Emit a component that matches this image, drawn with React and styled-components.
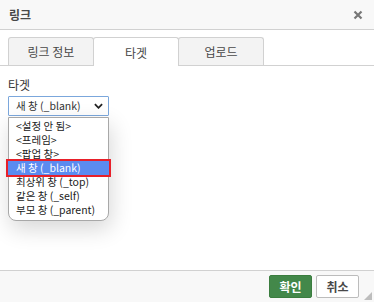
import React from "react";
import styled, { createGlobalStyle } from "styled-components";

const GlobalStyle = createGlobalStyle`
  html, body {
    margin: 0;
    padding: 0;
    background: #ffffff;
  }
  body {
    font-family: "Noto Sans CJK KR", "Liberation Sans", sans-serif;
    font-size: 12px;
    color: #333;
  }
`;

const options = [
  { label: "<설정 안 됨>" },
  { label: "<프레임>" },
  { label: "<팝업 창>" },
  { label: "새 창 (_blank)", selected: true },
  { label: "최상위 창 (_top)" },
  { label: "같은 창 (_self)" },
  { label: "부모 창 (_parent)" },
];

const tabs = ["링크 정보", "타겟", "업로드"];

export default function App() {
  return (
    <>
      <GlobalStyle />
      <Dialog>
        <Header>
          <Title>링크</Title>
          <CloseIcon viewBox="0 0 10 10" aria-label="닫기">
            <path d="M1.5 1.5 L8.5 8.5 M8.5 1.5 L1.5 8.5" />
          </CloseIcon>
        </Header>
        <Body>
          <TabBar>
            {tabs.map((tab, i) => (
              <Tab key={tab} $active={i === 1}>
                {tab}
              </Tab>
            ))}
          </TabBar>
          <Panel>
            <FieldLabel>타겟</FieldLabel>
            <SelectWrap>
              <SelectBox>
                <span>새 창 (_blank)</span>
                <Chevron viewBox="0 0 10 6">
                  <path d="M1 1 L5 5 L9 1" />
                </Chevron>
              </SelectBox>
              <OptionList>
                {options.map((opt) => (
                  <Option key={opt.label} $selected={opt.selected}>
                    {opt.label}
                  </Option>
                ))}
              </OptionList>
            </SelectWrap>
          </Panel>
        </Body>
        <Footer>
          <Button $primary>확인</Button>
          <Button>취소</Button>
          <ResizeGrip />
        </Footer>
      </Dialog>
    </>
  );
}

const Dialog = styled.div`
  position: relative;
  width: 374px;
  height: 302px;
  display: flex;
  flex-direction: column;
  background: #fff;
  overflow: hidden;
`;

const Header = styled.div`
  height: 30px;
  flex-shrink: 0;
  box-sizing: border-box;
  border-bottom: 1px solid #d1d1d1;
  background: #f8f8f8;
  display: flex;
  align-items: center;
  justify-content: space-between;
  padding: 0 10px 0 9px;
`;

const Title = styled.div`
  font-size: 12px;
  font-weight: bold;
  color: #484848;
`;

const CloseIcon = styled.svg`
  width: 10px;
  height: 10px;
  stroke: #777;
  stroke-width: 2.2;
  fill: none;
  margin-right: 1px;
`;

const Body = styled.div`
  flex: 1;
  padding-top: 7px;
`;

const TabBar = styled.div`
  display: flex;
  padding-left: 8px;
  border-bottom: 1px solid #d1d1d1;
  height: 28px;
`;

const Tab = styled.div`
  width: 86px;
  height: ${(p) => (p.$active ? "29px" : "28px")};
  box-sizing: border-box;
  border: 1px solid #d1d1d1;
  border-bottom: none;
  border-radius: 3px 3px 0 0;
  background: ${(p) => (p.$active ? "#fff" : "#f3f3f3")};
  display: flex;
  align-items: center;
  justify-content: center;
  font-size: 12px;
  color: #484848;
  margin-right: -1px;
  position: relative;
  z-index: ${(p) => (p.$active ? 1 : 0)};
`;

const Panel = styled.div`
  padding: 11px 8px 0;
`;

const FieldLabel = styled.div`
  font-size: 12px;
  color: #333;
  line-height: 16px;
  margin-bottom: 3px;
`;

const SelectWrap = styled.div`
  position: relative;
  width: 101px;
`;

const SelectBox = styled.div`
  height: 20px;
  box-sizing: border-box;
  border: 1px solid #7ba7dc;
  border-radius: 1px;
  display: flex;
  align-items: center;
  justify-content: space-between;
  padding: 0 5px 0 7px;
  font-size: 10.5px;
  line-height: 14px;
  color: #333;
`;

const Chevron = styled.svg`
  width: 9px;
  height: 6px;
  fill: none;
  stroke: #222;
  stroke-width: 2;
`;

const OptionList = styled.div`
  position: absolute;
  top: 21px;
  left: 0;
  width: 101px;
  box-sizing: border-box;
  background: #fff;
  border: 1px solid #a8a8a8;
  border-radius: 0 0 8px 8px;
  box-shadow: 2px 8px 22px rgba(0, 0, 0, 0.16);
  padding: 1px 0 3px;
`;

const Option = styled.div`
  height: 14px;
  line-height: 14px;
  font-size: 10.5px;
  padding: 0 0 0 7px;
  white-space: nowrap;
  overflow: hidden;
  background: ${(p) => (p.$selected ? "#5b8bf0" : "transparent")};
  color: ${(p) => (p.$selected ? "#fff" : "#222")};
  outline: ${(p) => (p.$selected ? "2px solid #e8202a" : "none")};
  margin: ${(p) => (p.$selected ? "0 -1px" : "0")};
  padding-left: ${(p) => (p.$selected ? "8px" : "7px")};
  position: relative;
`;

const Footer = styled.div`
  height: 32px;
  flex-shrink: 0;
  box-sizing: border-box;
  border-top: 1px solid #d1d1d1;
  background: #f8f8f8;
  display: flex;
  align-items: center;
  justify-content: flex-end;
  gap: 4px;
  padding: 0 15px 0 0;
  position: relative;
`;

const Button = styled.div`
  width: 43px;
  height: 23px;
  box-sizing: border-box;
  display: flex;
  align-items: center;
  justify-content: center;
  font-size: 12px;
  font-weight: bold;
  border-radius: 2px;
  border: 1px solid ${(p) => (p.$primary ? "#3b7d3f" : "#bcbcbc")};
  background: ${(p) => (p.$primary ? "#43884a" : "#fff")};
  color: ${(p) => (p.$primary ? "#fff" : "#484848")};
`;

const ResizeGrip = styled.div`
  position: absolute;
  right: 2px;
  bottom: 2px;
  width: 0;
  height: 0;
  border-left: 8px solid transparent;
  border-bottom: 8px solid #bdbdbd;
`;
